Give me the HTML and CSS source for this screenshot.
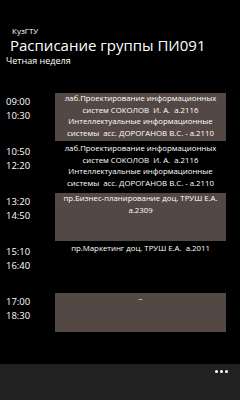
FILE: index.html
```html
<!DOCTYPE html>
<html lang="ru">
<head>
    <meta charset="UTF-8" />
    <meta name="viewport" content="width=device-width, initial-scale=1.0" />
    <title>Расписание группы ПИ091</title>
    <link rel="stylesheet" href="styles.css">
</head>
<body>
    <div class="page">
        <div class="header">
            <div class="app-name">КузГТУ</div>
            <h1 class="title">Расписание группы ПИ091</h1>
            <div class="week">Четная неделя</div>
        </div>

        <div class="schedule">
            <div class="lesson">
                <div class="time">09:00<br>10:30</div>
                <div class="subject filled">лаб.Проектирование информационных систем СОКОЛОВ&nbsp; И. А.&nbsp; а.2116<br>Интеллектуальные информационные системы&nbsp; асс. ДОРОГАНОВ В.С. - а.2110</div>
            </div>
            <div class="lesson">
                <div class="time">10:50<br>12:20</div>
                <div class="subject">лаб.Проектирование информационных систем СОКОЛОВ&nbsp; И. А.&nbsp; а.2116<br>Интеллектуальные информационные системы&nbsp; асс. ДОРОГАНОВ В.С. - а.2110</div>
            </div>
            <div class="lesson">
                <div class="time">13:20<br>14:50</div>
                <div class="subject filled">пр.Бизнес-планирование доц. ТРУШ Е.А.<br>а.2309</div>
            </div>
            <div class="lesson">
                <div class="time">15:10<br>16:40</div>
                <div class="subject">пр.Маркетинг доц. ТРУШ Е.А.&nbsp; а.2011</div>
            </div>
            <div class="lesson last">
                <div class="time">17:00<br>18:30</div>
                <div class="subject filled">–</div>
            </div>
        </div>

        <div class="app-bar">
            <span class="dot"></span>
            <span class="dot"></span>
            <span class="dot"></span>
        </div>
    </div>
</body>
</html>
```

FILE: styles.css
```css
body {
    margin: 0;
    padding: 0;
    background-color: #000;
    color: #fff;
    font-family: "Open Sans", "Noto Sans", sans-serif;
}

.page {
    display: flex;
    flex-direction: column;
    height: 400px;
    overflow: hidden;
}

.header {
    padding-top: 26px;
}

.app-name {
    padding-left: 12px;
    font-size: 8px;
    line-height: 9px;
}

.title {
    margin: 0;
    padding-left: 10px;
    font-size: 15px;
    font-weight: normal;
    line-height: 20px;
}

.week {
    padding-left: 6px;
    font-size: 9px;
    line-height: 12px;
}

.schedule {
    flex: 1;
    padding-top: 26px;
}

.lesson {
    display: flex;
    height: 48px;
    margin-bottom: 2px;
}

.lesson.last {
    height: 39px;
}

.time {
    width: 49px;
    padding-left: 6px;
    padding-top: 2px;
    font-size: 9.5px;
    line-height: 13.5px;
}

.subject {
    width: 171px;
    font-size: 7.8px;
    line-height: 11.5px;
    text-align: center;
}

.subject.filled {
    background-color: #544845;
}

.app-bar {
    display: flex;
    justify-content: flex-end;
    gap: 2px;
    height: 36px;
    padding: 6px 12px 0 0;
    box-sizing: border-box;
    background-color: #212121;
}

.dot {
    width: 3px;
    height: 3px;
    border-radius: 50%;
    background-color: #fff;
}
```
